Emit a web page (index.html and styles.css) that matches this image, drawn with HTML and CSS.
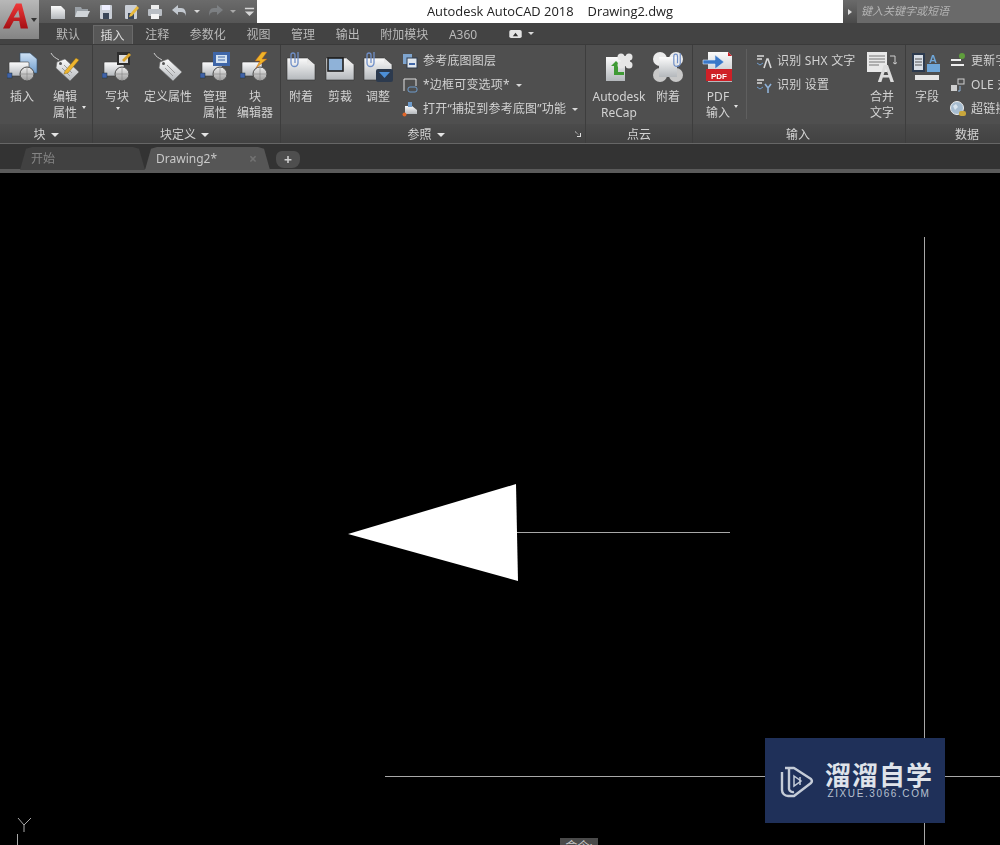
FILE: index.html
```html
<!DOCTYPE html>
<html lang="zh-CN">
<head>
<meta charset="utf-8">
<title>Autodesk AutoCAD 2018 Drawing2.dwg</title>
<link rel="stylesheet" href="styles.css">
</head>
<body>
<svg class="defs" aria-hidden="true">
  <defs>
    <linearGradient id="paper" x1="0" y1="0" x2="0" y2="1"><stop offset="0" stop-color="#fbfbfb"/><stop offset="1" stop-color="#b4b8bc"/></linearGradient>
    <linearGradient id="ball" x1="0" y1="0" x2="0" y2="1"><stop offset="0" stop-color="#eeeeee"/><stop offset="1" stop-color="#9a9a9a"/></linearGradient>
    <linearGradient id="blue" x1="0" y1="0" x2="0" y2="1"><stop offset="0" stop-color="#cfe2f5"/><stop offset="1" stop-color="#6f9ccc"/></linearGradient>
    <linearGradient id="logo" x1="0" y1="0" x2="0" y2="1"><stop offset="0" stop-color="#ef3a3a"/><stop offset="1" stop-color="#a50f14"/></linearGradient>
    <symbol id="blk" viewBox="0 0 30 30">
      <rect x="2" y="10" width="20" height="14" rx="1" fill="url(#paper)" stroke="#3a3a3a" stroke-width=".6"/>
      <circle cx="20" cy="22" r="7" fill="url(#ball)" stroke="#4a4a4a"/>
      <path d="M20 15v14M13 22h14" stroke="#777" stroke-width=".5"/>
      <rect x="0" y="21" width="5" height="5" fill="#3f62a8" stroke="#233" stroke-width=".5"/>
    </symbol>
    <symbol id="tag" viewBox="0 0 30 30">
      <path d="M1 1c2 4 5 5 8 7" fill="none" stroke="#cfcfcf" stroke-width="1"/>
      <path d="M7 10l8-3 14 13-9 9L6 16z" fill="url(#paper)" stroke="#666" stroke-width=".6"/>
      <circle cx="10.500" cy="11.500" r="1.500" fill="#555"/>
      <path d="M14 13l8 8M12 16l8 8" stroke="#9a9a9a"/>
    </symbol>
    <symbol id="page" viewBox="0 0 30 30">
      <path d="M1 6h20l8 7v15H1z" fill="url(#paper)" stroke="#333" stroke-width=".6"/>
      <path d="M21 6v7h8z" fill="#e8e8e8"/>
    </symbol>
    <symbol id="clip" viewBox="0 0 12 20">
      <path d="M9 2v11a3.500 3.500 0 0 1-7 0V5a2 2 0 0 1 4 0v8" fill="none" stroke="#6f8fc8" stroke-width="1.300"/>
    </symbol>
  </defs>
</svg>

<header class="chrome">
  <div class="top">
    <button class="app" aria-label="应用程序">
      <svg class="app-logo" viewBox="0 0 28 27"><path d="M14 0h6l7 27h-8l-1.500-8h-6l-4.500 8H0zM16.500 7l-5 8h6.500z" fill="url(#logo)" fill-rule="evenodd"/></svg>
      <i class="caret-dark"></i>
    </button>
    <div class="top-main">
      <div class="title-row">
        <div class="quick">
          <svg class="qi" viewBox="0 0 16 16"><path d="M1 2h10l4 4v9H1z" fill="url(#paper)"/></svg>
          <svg class="qi" viewBox="0 0 16 16"><path d="M1 3h6l1 2h6v8H1z" fill="#9aa0a6"/><path d="M3 7h13l-3 6H1z" fill="#d0d4d8"/></svg>
          <svg class="qi" viewBox="0 0 16 16"><rect x="2" y="1" width="12" height="14" rx="1" fill="#c9ced6"/><rect x="4" y="1" width="8" height="5" fill="#eef"/><rect x="5" y="9" width="6" height="6" fill="#3a4658"/></svg>
          <svg class="qi" viewBox="0 0 16 16"><rect x="2" y="1" width="12" height="14" rx="1" fill="#c9ced6"/><rect x="5" y="9" width="6" height="6" fill="#3a4658"/><path d="M7 10l7-8 2 2-7 8-3 1z" fill="#e8b93c"/></svg>
          <svg class="qi" viewBox="0 0 16 16"><rect x="4" y="1" width="8" height="5" fill="#eee"/><rect x="1" y="5" width="14" height="7" rx="1" fill="#b9bec4"/><rect x="4" y="10" width="8" height="5" fill="#f4f4f4"/></svg>
          <svg class="qi" viewBox="0 0 16 16"><path d="M1 6l6-5v3h3c4 0 5 3 5 8-1-3-2-4-5-4H7v3z" fill="#c3c9d0"/></svg>
          <i class="caret small"></i>
          <svg class="qi dim" viewBox="0 0 16 16"><path d="M15 6L9 1v3H6c-4 0-5 3-5 8 1-3 2-4 5-4h3v3z" fill="#8f9499"/></svg>
          <i class="caret small dim"></i>
          <svg class="qi last" viewBox="0 0 12 12"><path d="M1 2h10v1.500H1zM1 6h10L6 11z" fill="#d6d6d6"/></svg>
        </div>
        <div class="title"><span>Autodesk AutoCAD 2018</span><span>Drawing2.dwg</span></div>
        <div class="search-arrow"><i class="caret-right"></i></div>
        <div class="search">键入关键字或短语</div>
      </div>
      <nav class="tabs">
        <a>默认</a><a class="on">插入</a><a>注释</a><a>参数化</a><a>视图</a><a>管理</a><a>输出</a><a>附加模块</a><a>A360</a>
        <span class="cam">
          <svg viewBox="0 0 14 9"><rect width="14" height="9" rx="2" fill="#e4e4e4"/><path d="M4 7l3-4 3 4z" fill="#333"/></svg>
          <i class="caret small"></i>
        </span>
      </nav>
    </div>
  </div>

  <section class="ribbon">
    <div class="panel p1">
      <div class="body">
        <div class="big w44">
          <svg class="ic" viewBox="0 0 30 30"><path d="M13 1h10l7 6v14H13z" fill="url(#blue)" stroke="#34506e" stroke-width=".6"/><use href="#blk"/></svg>
          <span>插入</span>
        </div>
        <div class="big w42 caret-side">
          <svg class="ic" viewBox="0 0 30 30"><use href="#tag"/><path d="M15 19l11-13 3 2-11 13-4 1z" fill="#eeb52e" stroke="#7a5a10" stroke-width=".4"/></svg>
          <span>编辑<br>属性</span>
          <i class="caret tiny"></i>
        </div>
      </div>
      <div class="foot">块 <i class="caret"></i></div>
    </div>

    <div class="panel p2">
      <div class="body">
        <div class="big w48">
          <svg class="ic" viewBox="0 0 30 30"><use href="#blk"/><rect x="15" y="0" width="13" height="13" fill="#2e2e2e"/><rect x="17" y="3" width="9" height="8" fill="#ddd"/><path d="M20 8l7-7 2 2-7 7z" fill="#d9a32c"/></svg>
          <span>写块</span>
          <i class="caret tiny center"></i>
        </div>
        <div class="big w54">
          <svg class="ic" viewBox="0 0 30 30"><use href="#tag"/></svg>
          <span>定义属性</span>
        </div>
        <div class="big w40">
          <svg class="ic" viewBox="0 0 30 30"><use href="#blk"/><rect x="13" y="0" width="17" height="14" fill="#3f66a8"/><rect x="16" y="3" width="11" height="8" fill="#d5e3f2"/><path d="M18 5h7M18 8h7" stroke="#3f66a8"/></svg>
          <span>管理<br>属性</span>
        </div>
        <div class="big w40">
          <svg class="ic" viewBox="0 0 30 30"><use href="#blk"/><path d="M22 0l-7 9h5l-4 7 11-9h-5l5-7z" fill="#f0b428" stroke="#b5561a" stroke-width=".5"/></svg>
          <span>块<br>编辑器</span>
        </div>
      </div>
      <div class="foot">块定义 <i class="caret"></i></div>
    </div>

    <div class="panel p3">
      <div class="body">
        <div class="big w40">
          <svg class="ic" viewBox="0 0 30 30"><use href="#page"/><use href="#clip" x="3" y="-2" width="12" height="20"/></svg>
          <span>附着</span>
        </div>
        <div class="big w38">
          <svg class="ic" viewBox="0 0 30 30"><use href="#page"/><rect x="3" y="6" width="15" height="13" fill="#8fb2d8" stroke="#1d1d1d" stroke-width="1.600"/></svg>
          <span>剪裁</span>
        </div>
        <div class="big w38">
          <svg class="ic" viewBox="0 0 30 30"><use href="#page"/><use href="#clip" x="2" y="-2" width="12" height="20"/><rect x="13" y="17" width="17" height="13" rx="2" fill="#2c3a4e"/><path d="M16 20h11l-5.500 6z" fill="#4c8fd8"/></svg>
          <span>调整</span>
        </div>
        <div class="rows r3">
          <div class="row">
            <svg class="si" viewBox="0 0 16 16"><rect x="1" y="1" width="9" height="10" fill="#7fa5cf"/><rect x="5" y="5" width="10" height="10" fill="#dfe6ee" stroke="#2c3a4e"/><path d="M7 11h6" stroke="#3f66a8" stroke-width="2"/></svg>
            <span>参考底图图层</span>
          </div>
          <div class="row">
            <svg class="si" viewBox="0 0 16 16"><path d="M2 14V2h12v7" fill="none" stroke="#e0e0e0"/><rect x="6" y="10" width="9" height="5" rx="2" fill="none" stroke="#6f9ccc"/></svg>
            <span>*边框可变选项*</span><i class="caret small gap"></i>
          </div>
          <div class="row">
            <svg class="si" viewBox="0 0 16 16"><path d="M3 5h7l5 4v4H3z" fill="url(#paper)"/><path d="M6 1h4v5H6z" fill="#6f9ccc"/><circle cx="2.500" cy="13.500" r="2" fill="#e0662a"/></svg>
            <span>打开“捕捉到参考底图”功能</span><i class="caret small gap"></i>
          </div>
        </div>
      </div>
      <div class="foot">参照 <i class="caret"></i><svg class="launch" viewBox="0 0 7 7"><path d="M0 0l5 5V2h1v4H2V5h3L0 1z" fill="#ddd"/></svg></div>
    </div>

    <div class="panel p4">
      <div class="body">
        <div class="big w66">
          <svg class="ic" viewBox="0 0 30 30"><path d="M2 5h19v24H2z" fill="url(#paper)"/><path d="M12 9l-5 5h3v9h10v-3h-6v-6h3z" fill="#3f9a35"/><g fill="#e6e6e6"><circle cx="17" cy="5" r="3.500"/><circle cx="25" cy="5" r="3.500"/><circle cx="17" cy="13" r="3.500"/><circle cx="25" cy="13" r="3.500"/><rect x="17" y="4" width="9" height="10"/></g></svg>
          <span>Autodesk<br>ReCap</span>
        </div>
        <div class="big w32">
          <svg class="ic" viewBox="0 0 30 30"><g fill="#ececec"><circle cx="7" cy="7" r="7"/><circle cx="23" cy="7" r="7"/></g><g fill="#c8c8c8"><circle cx="7" cy="23" r="7"/><circle cx="23" cy="23" r="7"/></g><rect x="6" y="5" width="18" height="20" fill="url(#paper)"/><use href="#clip" x="19" y="-1" width="11" height="19"/></svg>
          <span>附着</span>
        </div>
      </div>
      <div class="foot">点云</div>
    </div>

    <div class="panel p5">
      <div class="body">
        <div class="big w50">
          <svg class="ic pdf" viewBox="0 0 30 32"><path d="M5 1h20l4 4v26H5z" fill="url(#paper)"/><path d="M25 1l4 4h-4z" fill="#cf2027"/><rect x="3" y="18" width="26" height="12" fill="#cf2027"/><text x="16" y="27.500" class="pdf-t">PDF</text><path d="M0 9h12V4l9 7-9 7v-5H0z" fill="#3a78c8" stroke="#dfeaf6" stroke-width=".6"/></svg>
          <span>PDF<br>输入</span>
          <i class="caret tiny pdf-caret"></i>
        </div>
        <div class="vsep"></div>
        <div class="rows r2">
          <div class="row">
            <svg class="si" viewBox="0 0 16 16"><path d="M1 3h7M1 6h5" stroke="#b8b8b8" stroke-width="2"/><path d="M1 10l3 2 3-2" fill="none" stroke="#6f9ccc"/><path d="M8 15l3-9h1l3 9" fill="none" stroke="#d8d8d8" stroke-width="1.600"/></svg>
            <span>识别 SHX 文字</span>
          </div>
          <div class="row">
            <svg class="si" viewBox="0 0 16 16"><path d="M1 3h7M1 6h5" stroke="#b8b8b8" stroke-width="2"/><path d="M1 10l3 2 3-2" fill="none" stroke="#6f9ccc"/><path d="M9 7l3 4 3-4M12 11v5" fill="none" stroke="#8fb2d8" stroke-width="1.600"/></svg>
            <span>识别 设置</span>
          </div>
        </div>
        <div class="big w46">
          <svg class="ic" viewBox="0 0 30 30"><path d="M0 0h20v20H0z" fill="#e8e8e8"/><path d="M2 4h16M2 7h16M2 10h16M2 13h10" stroke="#777"/><text x="19" y="30" class="big-a">A</text><path d="M23 4h5v8l-2-1.500M28 12l2-1.500" fill="none" stroke="#cfcfcf"/></svg>
          <span>合并<br>文字</span>
        </div>
      </div>
      <div class="foot">输入</div>
    </div>

    <div class="panel p6">
      <div class="body">
        <div class="big w42">
          <svg class="ic" viewBox="0 0 30 30"><rect x="0" y="1" width="13" height="19" fill="#2c3a4e"/><rect x="2" y="3" width="9" height="15" fill="#d8dee6"/><path d="M3 7h7M3 10h7M3 13h7" stroke="#555"/><text x="21" y="11" class="mini-a">A</text><rect x="15" y="12" width="13" height="8" fill="#6fa6d8"/><rect x="3" y="23" width="24" height="5" fill="#e6e6e6"/></svg>
          <span>字段</span>
        </div>
        <div class="rows r3 clip">
          <div class="row">
            <svg class="si" viewBox="0 0 16 16"><path d="M1 7h10M1 12h13" stroke="#eee" stroke-width="2"/><circle cx="12" cy="3" r="3" fill="#5f9e3c"/></svg>
            <span>更新字段</span>
          </div>
          <div class="row">
            <svg class="si" viewBox="0 0 16 16"><rect x="1" y="8" width="6" height="6" fill="#cfcfcf"/><rect x="8" y="2" width="6" height="5" fill="none" stroke="#cfcfcf"/><path d="M10 9v5h-2" fill="none" stroke="#8fb2d8"/></svg>
            <span>OLE 对象</span>
          </div>
          <div class="row">
            <svg class="si" viewBox="0 0 16 16"><circle cx="7" cy="7" r="6.500" fill="#a6bcd0" stroke="#eee"/><path d="M3 5l3-2 2 3-3 3z" fill="#d8e4ee"/><rect x="9" y="10" width="7" height="5" rx="2" fill="#c8a63c"/></svg>
            <span>超链接</span>
          </div>
        </div>
      </div>
      <div class="foot">数据</div>
    </div>
  </section>

  <div class="doctabs">
    <div class="doc idle">开始</div>
    <div class="doc current"><span>Drawing2*</span><b>×</b></div>
    <div class="doc-add">+</div>
  </div>
</header>

<main class="canvas">
  <svg class="drawing" viewBox="0 0 1000 672">
    <path d="M924.500 64V672M385 603.500H1000M517 359.500H730" class="wire"/>
    <path d="M348 361L516 311L518 408Z" fill="#fff"/>
    <path d="M17.500 661V672M18 645L24 652M31 645L24 652M24 652V659" class="ucs"/>
  </svg>
  <div class="cmd">命令:</div>
  <div class="mark">
    <svg class="mark-ic" viewBox="0 0 36 36"><path d="M6 5h9l17 11a3 3 0 0 1 0 4L15 33H9a6 6 0 0 1-6-6V9" fill="none" stroke="#c5ccd8" stroke-width="2.400" stroke-linejoin="round"/><path d="M10 5v21a4 4 0 0 0 5 3" fill="none" stroke="#c5ccd8" stroke-width="2.400"/><path d="M15 13l7 5-7 5z" fill="none" stroke="#c5ccd8" stroke-width="1.500"/><path d="M21 14v8" stroke="#c5ccd8" stroke-width="1.500"/></svg>
    <div class="mark-text">
      <strong>溜溜自学</strong>
      <small>ZIXUE.3066.COM</small>
    </div>
  </div>
</main>
</body>
</html>
```
FILE: styles.css
```css
* { box-sizing: border-box; }
html, body { margin: 0; height: 845px; overflow: hidden; background: #000; }
body {
  display: flex;
  flex-direction: column;
  font: 12px/16px "Noto Sans", "Noto Sans CJK SC", sans-serif;
  color: #d2d2d2;
}
.defs { position: absolute; width: 0; height: 0; }
.chrome { flex: none; filter: blur(.5px); }

/* top block: application button + title and tabs */
.top { display: flex; height: 44px; background: #434343; }
.app {
  flex: none;
  width: 39px;
  height: 39px;
  padding: 3px 0 0 3px;
  border: 0;
  display: flex;
  align-items: flex-start;
  background: linear-gradient(#b8b8b8, #848484);
}
.app-logo { width: 26px; height: 26px; flex: none; }
.caret-dark {
  margin: 15px 0 0 2px;
  border: 3px solid transparent;
  border-top: 4px solid #333;
  border-bottom: 0;
}
.top-main { flex: 1; min-width: 0; }
.title-row { display: flex; height: 23px; }
.quick {
  width: 218px;
  flex: none;
  display: flex;
  align-items: center;
  padding-left: 11px;
  background: linear-gradient(#6b6b6b, #565656);
}
.qi { width: 16px; height: 16px; margin-right: 8.200px; flex: none; }
.qi.dim, .caret.dim { opacity: .6; }
.qi.last { width: 11px; height: 11px; margin: 0; }
.quick .caret { margin: 0 8px 0 -1.500px; }
.title {
  flex: 1;
  display: flex;
  justify-content: center;
  gap: 14px;
  padding: 1px 0 0 0;
  background: #fff;
  color: #222;
  font: 12.900px/20px "Open Sans", "Liberation Sans", sans-serif;
}
.search-arrow {
  width: 14px;
  flex: none;
  display: flex;
  align-items: center;
  justify-content: center;
  background: linear-gradient(#6a6a6a, #4a4a4a);
}
.caret-right {
  border: 3px solid transparent;
  border-left: 4px solid #ddd;
  border-right: 0;
}
.search {
  width: 143px;
  flex: none;
  padding: 2px 0 0 4px;
  background: #6a6a6a;
  color: #b4b4b4;
  font-size: 11px;
  line-height: 17px;
  font-style: italic;
}
.tabs {
  display: flex;
  align-items: stretch;
  gap: 20.600px;
  height: 21px;
  padding-left: 17px;
  line-height: 24px;
  color: #b9b9b9;
}
.tabs a { display: block; }
.tabs .on {
  margin: 2px -8px 0 -8px;
  padding: 0 7px;
  height: 19px;
  line-height: 20px;
  background: #575757;
  border: 1px solid #6a6a6a;
  border-bottom: 0;
  color: #dcdcdc;
}
.cam { display: flex; align-items: center; gap: 6px; margin-left: 11px; }
.cam svg { width: 13px; height: 8px; }

/* ribbon */
.ribbon { display: flex; height: 99px; background: #4f4f4f; border-top: 1px solid #3a3a3a; overflow: hidden; }
.panel {
  flex: none;
  display: flex;
  flex-direction: column;
  border-right: 1px solid #3d3d3d;
}
.p1 { width: 93px; }
.p2 { width: 188px; }
.p2 .foot { padding-right: 4px; }
.p3 { width: 305px; }
.p3 .foot { padding: 2px 14px 0 0; }
.p4 { width: 107px; }
.p5 { width: 213px; }
.p5 .foot { padding-right: 2px; }
.p6 { width: 122px; border-right: 0; }
.body { flex: 1; display: flex; min-height: 0; }
.foot {
  position: relative;
  flex: none;
  height: 19px;
  padding-top: 2px;
  display: flex;
  align-items: center;
  justify-content: center;
  gap: 5px;
  background: linear-gradient(#4b4b4b, #424242);
  line-height: 18px;
}
.p2 .foot { padding-top: 2px; }
.p5 .foot { padding-top: 2px; }
.launch { position: absolute; right: 3px; top: 7px; width: 7px; height: 7px; }
.big {
  position: relative;
  flex: none;
  display: flex;
  flex-direction: column;
  align-items: center;
  padding-top: 7px;
  text-align: center;
}
.big span { margin-top: 7px; }
.ic { width: 30px; height: 30px; flex: none; overflow: visible; }
.ic.pdf { height: 32px; margin-top: -1px; margin-bottom: -1px; }
.w44 { width: 44px; }
.w42 { width: 42px; }
.w48 { width: 48px; }
.w54 { width: 54px; }
.w40 { width: 40px; }
.w38 { width: 38px; }
.w66 { width: 66px; }
.w32 { width: 32px; }
.w50 { width: 50px; }
.w46 { width: 46px; }
.caret {
  display: inline-block;
  flex: none;
  border: 4px solid transparent;
  border-top: 4px solid #e4e4e4;
  border-bottom: 0;
}
.caret.small { border-width: 3px 3px 0; border-top-color: #d8d8d8; }
.caret.tiny {
  position: absolute;
  border-width: 3px 2.500px 0;
  border-top-color: #e4e4e4;
  right: 0;
  top: 61px;
}
.caret.tiny.center { right: 21px; top: 62px; }
.caret.tiny.pdf-caret { right: 5px; top: 60px; }
.caret.gap { margin-left: 1px; }
.rows {
  flex: none;
  display: flex;
  flex-direction: column;
  padding: 8px 0 0 5px;
  gap: 8px;
}
.row { display: flex; align-items: center; gap: 5px; height: 16px; white-space: nowrap; letter-spacing: .2px; }
.si { width: 16px; height: 16px; flex: none; }
.vsep { flex: none; width: 1px; height: 70px; margin: 4px 9px 0 3px; background: #5f5f5f; }
.r2 { width: 103px; padding-left: 0; }
.pdf-t { font: bold 8px "Liberation Sans", sans-serif; fill: #fff; text-anchor: middle; }
.big-a { font: bold 24px "Liberation Sans", sans-serif; fill: #dcdcdc; text-anchor: middle; }
.mini-a { font: bold 11px "Liberation Sans", sans-serif; fill: #6fa6d8; text-anchor: middle; }
.clip { padding-left: 2px; }

/* document tabs */
.doctabs {
  display: flex;
  align-items: flex-end;
  height: 30px;
  padding: 0 0 3px 20px;
  border-top: 1px solid #666;
  background: linear-gradient(#333 0, #333 25px, #5a5a5a 25px, #5a5a5a 100%);
}
.doc {
  width: 125px;
  height: 23px;
  padding-left: 11px;
  line-height: 24px;
  clip-path: polygon(0 100%, 6px 8%, 12px 0, calc(100% - 12px) 0, calc(100% - 6px) 8%, 100% 100%);
}
.doc.idle { background: #414141; color: #858585; }
.doc.current {
  display: flex;
  justify-content: space-between;
  padding-right: 13px;
  background: #565656;
  color: #c8c8c8;
}
.doc.current b { color: #727272; font-size: 14px; }
.doc-add {
  width: 24px;
  height: 17px;
  margin: 0 0 2px 6px;
  border-radius: 6px 6px 8px 8px;
  background: #4e4e4e;
  text-align: center;
  font-weight: bold;
  font-size: 14px;
  line-height: 17px;
  color: #cfcfcf;
}

/* drawing area */
.canvas { position: relative; flex: 1; min-height: 0; background: #000; overflow: hidden; }
.drawing { position: absolute; left: 0; top: 0; width: 1000px; height: 672px; }
.wire { fill: none; stroke: #a8a8a8; stroke-width: 1; }
.ucs { fill: none; stroke: #a8a8a8; stroke-width: 1; }
.cmd {
  position: absolute;
  left: 560px;
  top: 665px;
  width: 38px;
  height: 18px;
  text-align: center;
  background: #4a4a4a;
  color: #c8c8c8;
  font-size: 12px;
  line-height: 17px;
}
.mark {
  position: absolute;
  left: 765px;
  top: 565px;
  width: 180px;
  height: 85px;
  display: flex;
  align-items: center;
  gap: 10px;
  padding: 0 0 0 14px;
  background: #1f3059;
}
.mark-ic { width: 36px; height: 36px; flex: none; }
.mark-text { display: flex; flex-direction: column; align-items: center; gap: 1px; color: #dfe3ea; }
.mark-text strong { font: 700 26px/26px "Noto Sans CJK SC", sans-serif; letter-spacing: 1px; }
.mark-text small { font: 10px/12px "Liberation Sans", sans-serif; letter-spacing: 1.600px; color: #b8c0d0; }
```
